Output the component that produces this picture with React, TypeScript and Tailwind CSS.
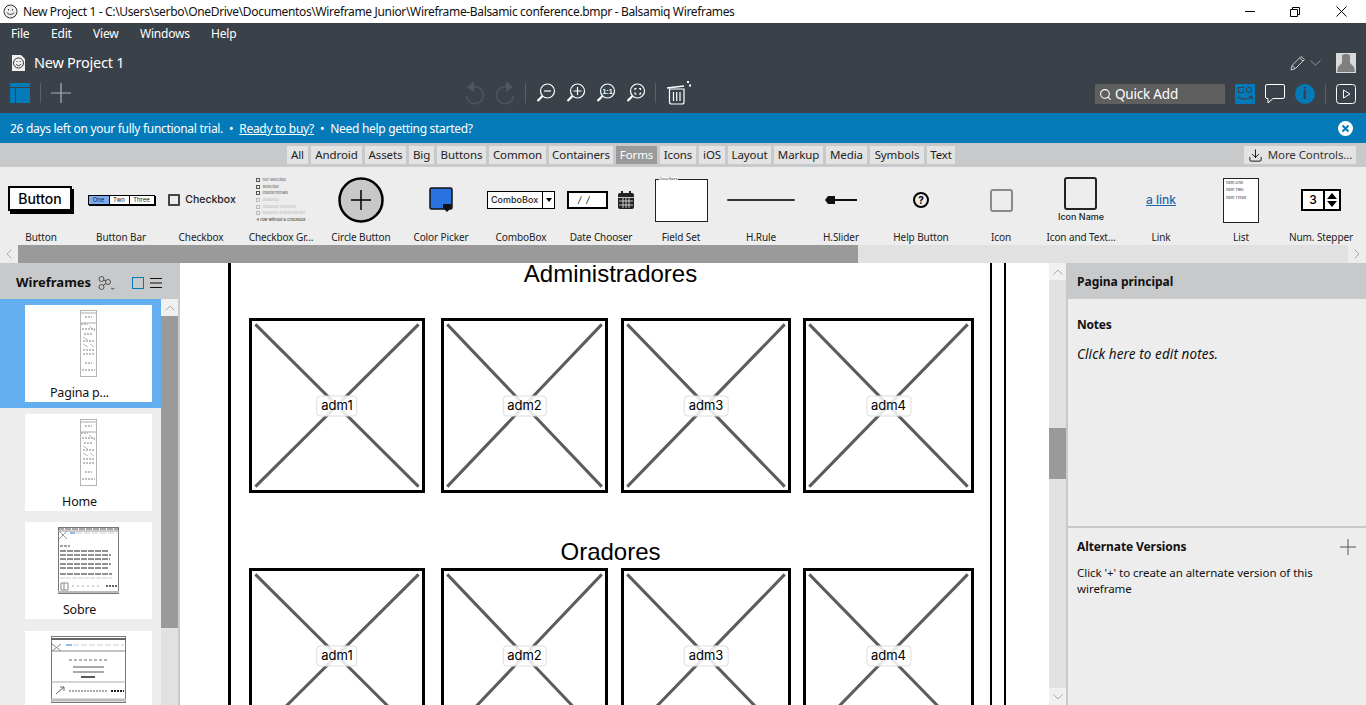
import { Download, Search } from 'lucide-react';

const tabs = [
  { label: 'All', w: 'w-[21px]' },
  { label: 'Android', w: 'w-[51px]' },
  { label: 'Assets', w: 'w-[41px]' },
  { label: 'Big', w: 'w-[25px]' },
  { label: 'Buttons', w: 'w-[49px]' },
  { label: 'Common', w: 'w-[57px]' },
  { label: 'Containers', w: 'w-[64px]' },
  { label: 'Forms', w: 'w-[41px]', active: true },
  { label: 'Icons', w: 'w-[36px]' },
  { label: 'iOS', w: 'w-[26px]' },
  { label: 'Layout', w: 'w-[43px]' },
  { label: 'Markup', w: 'w-[49px]' },
  { label: 'Media', w: 'w-[41px]' },
  { label: 'Symbols', w: 'w-[54px]' },
  { label: 'Text', w: 'w-[28px]' },
];

function ZoomIcon({ kind }: { kind: 'out' | 'in' | 'one' | 'fit' }) {
  return (
    <svg width="20" height="20" viewBox="0 0 20 20" fill="none" stroke="#fff" strokeWidth="1.2">
      <circle cx="11.5" cy="8" r="7" />
      <path d="M6.5 13 L1.5 18" strokeWidth="2.2" />
      {kind === 'out' && <path d="M8 8 H15" />}
      {kind === 'in' && <path d="M7.5 8 H15.5 M11.5 4 V12" />}
      {kind === 'one' && (
        <text x="11.5" y="10.5" fontSize="7" fontWeight="700" fill="#fff" stroke="none" textAnchor="middle" fontFamily="Liberation Sans">
          1:1
        </text>
      )}
      {kind === 'fit' && <path d="M9 7 V5.5 H10.5 M13 5.5 H14.5 V7 M14.5 9.5 V11 H13 M10.5 11 H9 V9.5" />}
    </svg>
  );
}

function Thumb({ kind }: { kind: number }) {
  if (kind < 2) {
    return (
      <svg width="17" height="67" viewBox="0 0 17 67" className="shrink-0">
        <rect x="0.5" y="0.5" width="16" height="66" fill="#fff" stroke="#b5b5b5" />
        <path d="M1 3 H16 M1 13 H16" stroke="#aaa" />
        <path d="M5 7 H12 M1 14 H8 M2 19 H15 M4 24 H13 M3 31 H14 M3 40 H14 M3 44 H14 M5 53 H12 M2 60 H15" stroke="#aaa" strokeDasharray="2 1" strokeWidth="1.5" />
        <path d="M9 16 L15 21 M3 27 L8 30 M3 34 L8 37 M10 34 L14 37" stroke="#bbb" />
      </svg>
    );
  }
  if (kind === 2) {
    return (
      <svg width="61" height="67" viewBox="0 0 61 67" className="shrink-0">
        <rect x="0.5" y="0.5" width="60" height="66" fill="#fff" stroke="#777" />
        <path d="M0 2 H61" stroke="#555" strokeDasharray="6 1" />
        <path d="M1 4 L9 12 M9 4 L1 12 M0 4 H61" stroke="#999" />
        <path d="M12 6 H17" stroke="#6aa4e0" strokeWidth="1.5" />
        <path d="M18 6 H59" stroke="#ccc" strokeDasharray="6 2" />
        <path d="M2 19 H12" stroke="#444" strokeDasharray="3 1" />
        <path d="M2 24 H50 M2 28 H53 M2 32 H52 M2 37 H53 M2 41 H50 M2 47 H54" stroke="#222" strokeDasharray="6 1" />
        <path d="M2 51 H54" stroke="#ccc" strokeDasharray="5 1" />
        <path d="M3 56 H10 V63 H3 Z M6 56 V63" fill="none" stroke="#888" />
        <path d="M14 59 H44" stroke="#aaa" strokeDasharray="2 3" />
        <path d="M48 59 H59" stroke="#333" strokeWidth="1.5" strokeDasharray="2 1" />
        <path d="M0 65 H61" stroke="#bbb" strokeWidth="2" />
      </svg>
    );
  }
  return (
    <svg width="75" height="67" viewBox="0 0 75 67" className="shrink-0">
      <rect x="0.5" y="0.5" width="74" height="66" fill="#fff" stroke="#777" />
      <path d="M0 3 H75" stroke="#666" strokeWidth="2" />
      <path d="M1 8 L10 15 M10 8 L1 15 M0 15 H75" stroke="#888" />
      <path d="M15 9 H21" stroke="#6aa4e0" strokeWidth="1.5" />
      <path d="M22 9 H73" stroke="#ccc" strokeDasharray="6 2" />
      <path d="M18 24 H57" stroke="#666" strokeDasharray="3 2" />
      <path d="M22 31 H53 M22 36 H53" stroke="#555" />
      <path d="M30 41 H44" stroke="#222" strokeWidth="1.5" />
      <path d="M0 46 H75" stroke="#aaa" />
      <path d="M5 58 L13 51 M9 51 H13 V55" stroke="#666" fill="none" />
      <path d="M18 55 H57" stroke="#555" strokeDasharray="2 1" />
      <path d="M60 55 H73" stroke="#222" strokeWidth="2" strokeDasharray="2 1" />
      <path d="M0 64 H75" stroke="#bbb" strokeWidth="3" />
    </svg>
  );
}

function WireImage({ label, w }: { label: string; w: string }) {
  return (
    <div className={`relative h-[175px] shrink-0 border-[3px] border-black ${w}`}>
      <svg className="h-full w-full" viewBox="0 0 100 100" preserveAspectRatio="none">
        <path d="M2 2 L98 98 M98 2 L2 98" stroke="#5c5c5c" strokeWidth="3" vectorEffect="non-scaling-stroke" />
      </svg>
      <div className="absolute left-1/2 top-1/2 flex h-[21px] -translate-x-1/2 -translate-y-1/2 items-center rounded-[4px] border border-[#dddddd] bg-white/85 px-[4px] font-['Inter',sans-serif] text-[13px] text-black">
        {label}
      </div>
    </div>
  );
}

function ImageRow({ names }: { names: string[] }) {
  return (
    <div className="flex pl-[18px]">
      <WireImage label={names[0]} w="w-[176px]" />
      <div className="ml-[16px]"><WireImage label={names[1]} w="w-[167px]" /></div>
      <div className="ml-[13px]"><WireImage label={names[2]} w="w-[170px]" /></div>
      <div className="ml-[12px]"><WireImage label={names[3]} w="w-[171px]" /></div>
    </div>
  );
}

function LibraryPreview({ name }: { name: string }) {
  switch (name) {
    case 'Button':
      return (
        <div className="-ml-[2px] -mt-[3px] flex h-[25px] w-[64px] items-center justify-center border-2 border-black bg-white font-['Inter',sans-serif] text-[14px] font-medium text-black shadow-[2px_3px_0_#000]">
          Button
        </div>
      );
    case 'Button Bar':
      return (
        <div className="flex h-[10px] w-[67px] border border-black text-center font-['Inter',sans-serif] text-[6px] leading-[8px] text-[#222] shadow-[1px_1px_0_#000]">
          <div className="w-[21px] border-r border-black bg-[#7cacef]">One</div>
          <div className="w-[20px] border-r border-black bg-white">Two</div>
          <div className="flex-1 bg-white">Three</div>
        </div>
      );
    case 'Checkbox':
      return (
        <div className="ml-[2px] flex items-center gap-[5px] font-['Inter',sans-serif] text-[10.5px] font-medium text-[#222]">
          <div className="size-[12px] rounded-[1px] border-2 border-[#444]" />
          Checkbox
        </div>
      );
    case 'Checkbox Gr...':
      return (
        <div className="flex flex-col gap-[2.7px] font-['Inter',sans-serif] text-[4px] leading-[4px] text-[#555]">
          {['not selected', 'selected', 'indeterminate'].map((t) => (
            <div key={t} className="flex items-center gap-[2px]"><div className="size-[4px] border border-[#555]" />{t}</div>
          ))}
          {['disabled', 'disabled selected', 'disabled indeterminate'].map((t) => (
            <div key={t} className="flex items-center gap-[2px] text-[#bbb]"><div className="size-[4px] border border-[#bbb]" />{t}</div>
          ))}
          <div className="text-[#222]">A row without a checkbox</div>
        </div>
      );
    case 'Circle Button':
      return (
        <svg width="46" height="46" viewBox="0 0 46 46" fill="none">
          <circle cx="23" cy="23" r="21.5" fill="#c8c8c8" stroke="#000" strokeWidth="2.5" />
          <path d="M13 23 H33 M23 13 V33" stroke="#000" strokeWidth="1.5" />
        </svg>
      );
    case 'Color Picker':
      return (
        <svg width="24" height="26" viewBox="0 0 24 26">
          <rect x="1" y="1" width="22" height="21" rx="1.5" fill="#2a72e0" stroke="#111" strokeWidth="1.5" />
          <path d="M14 17 H22 V21 L18 25 L14 21 Z" fill="#111" />
        </svg>
      );
    case 'ComboBox':
      return (
        <div className="flex h-[18px] w-[68px] border border-black bg-white font-['Inter',sans-serif] text-[9px] font-medium leading-[15px] text-[#222]">
          <div className="flex-1 pl-[3px]">ComboBox</div>
          <div className="flex w-[12px] items-center justify-center border-l border-black">
            <div className="size-0 border-x-[3px] border-t-[4px] border-x-transparent border-t-black" />
          </div>
        </div>
      );
    case 'Date Chooser':
      return (
        <div className="-ml-[1px] flex items-center gap-[10px]">
          <div className="h-[18px] w-[41px] border-2 border-black bg-white pl-[9px] font-['Inter',sans-serif] text-[9px] italic leading-[14px] text-black">/&nbsp;&nbsp;/</div>
          <svg width="16" height="18" viewBox="0 0 16 18">
            <rect x="0" y="2" width="16" height="16" rx="2" fill="#222" />
            <path d="M4 0 V4 M12 0 V4" stroke="#222" strokeWidth="2" />
            <path d="M0 6.5 H16 M1 10 H15 M1 14 H15 M5 7 V17 M8 7 V17 M11 7 V17" stroke="#ededed" strokeWidth="0.8" />
          </svg>
        </div>
      );
    case 'Field Set':
      return (
        <div className="relative h-[43px] w-[53px] border border-[#222] bg-white">
          <div className="absolute left-[3px] top-[-3px] bg-white px-px font-['Inter',sans-serif] text-[3px] leading-[4px] text-[#333]">Group Name</div>
        </div>
      );
    case 'H.Rule':
      return <div className="h-[2px] w-[68px] rounded-full bg-[#333]" />;
    case 'H.Slider':
      return (
        <svg width="34" height="12" viewBox="0 0 34 12">
          <path d="M8 6 H33" stroke="#111" strokeWidth="2" />
          <path d="M1 6 L4 2 H11 V10 H4 Z" fill="#111" />
        </svg>
      );
    case 'Help Button':
      return (
        <div className="flex size-[16px] items-center justify-center rounded-full border-2 border-black font-['Inter',sans-serif] text-[10px] font-bold leading-none text-black">?</div>
      );
    case 'Icon':
      return <div className="size-[23px] rounded-[3px] border-2 border-[#8a8a8a]" />;
    case 'Icon and Text...':
      return (
        <div className="flex flex-col items-center">
          <div className="size-[33px] rounded-[3px] border-2 border-[#222]" />
          <div className="mt-[1px] font-['Inter',sans-serif] text-[9px] font-medium leading-[12px] text-[#222]">Icon Name</div>
        </div>
      );
    case 'Link':
      return <div className="font-['Inter',sans-serif] text-[12px] font-medium text-[#1f69a8] underline">a link</div>;
    case 'List':
      return (
        <div className="flex h-[45px] w-[36px] flex-col gap-[3.5px] border border-[#222] bg-white pl-[2px] pt-[2px] font-['Inter',sans-serif] text-[4px] leading-[4px] text-[#333]">
          <div>Item One</div>
          <div>Item Two</div>
          <div>Item Three</div>
        </div>
      );
    case 'Num. Stepper':
      return (
        <div className="flex h-[22px] w-[40px] border-2 border-black bg-white font-['Inter',sans-serif] text-[12px] font-medium leading-[18px] text-black">
          <div className="w-[22px] border-r-2 border-black text-center">3</div>
          <div className="flex flex-1 flex-col items-center justify-center gap-[2px]">
            <div className="size-0 border-x-[5px] border-b-[6px] border-x-transparent border-b-black" />
            <div className="size-0 border-x-[5px] border-t-[6px] border-x-transparent border-t-black" />
          </div>
        </div>
      );
    default:
      return null;
  }
}

const libraryItems = [
  'Button', 'Button Bar', 'Checkbox', 'Checkbox Gr...', 'Circle Button', 'Color Picker', 'ComboBox', 'Date Chooser', 'Field Set',
  'H.Rule', 'H.Slider', 'Help Button', 'Icon', 'Icon and Text...', 'Link', 'List', 'Num. Stepper',
];

const thumbs = [
  { label: 'Pagina p...', h: 'h-[109px]', selected: true },
  { label: 'Home', h: 'h-[108px]' },
  { label: 'Sobre', h: 'h-[109px]' },
  { label: '', h: 'h-[109px]' },
];

export default function App() {
  return (
    <div className="flex h-[705px] w-[1366px] flex-col overflow-hidden bg-white font-['Noto_Sans',sans-serif] text-[12px] text-black">
      {/* Title bar */}
      <div className="flex h-[23px] shrink-0 items-center bg-white pl-[3px]">
        <svg width="15" height="15" viewBox="0 0 15 15" fill="none" stroke="#333" strokeWidth="1">
          <circle cx="7.5" cy="7.5" r="6.5" fill="#eee" />
          <path d="M4 8.5 C5 11 10 11 11 8.5" />
          <path d="M5.5 5 V6.5 M9.5 5 V6.5" />
        </svg>
        <span className="ml-[5px] tracking-[-0.34px] text-[#111]">
          New Project 1 - C:\Users\serbo\OneDrive\Documentos\Wireframe Junior\Wireframe-Balsamic conference.bmpr - Balsamiq Wireframes
        </span>
        <div className="ml-auto flex items-center">
          <div className="mr-[35px] h-px w-[10px] bg-black" />
          <svg className="mr-[36px]" width="10" height="10" viewBox="0 0 10 10" fill="none" stroke="#000">
            <path d="M0.5 2.5 H7.5 V9.5 H0.5 Z M2.5 2.5 V0.5 H9.5 V7.5 H7.5" />
          </svg>
          <svg className="mr-[19px]" width="11" height="11" viewBox="0 0 11 11" stroke="#000">
            <path d="M0.5 0.5 L10.5 10.5 M10.5 0.5 L0.5 10.5" />
          </svg>
        </div>
      </div>

      {/* Dark header */}
      <div className="flex h-[90px] shrink-0 flex-col bg-[#3a4149] text-white">
        <div className="flex h-[20px] items-center pl-[11px] pt-[1px] tracking-[-0.2px]">
          <span className="w-[40px]">File</span>
          <span className="w-[42px]">Edit</span>
          <span className="w-[47px]">View</span>
          <span className="w-[71px]">Windows</span>
          <span>Help</span>
        </div>
        <div className="flex h-[40px] items-center pl-[11px] pr-[10px]">
          <svg width="14" height="16" viewBox="0 0 14 16">
            <path d="M1 0 H10 L14 4 V16 H1 Z" fill="#f0f0f0" />
            <circle cx="7.5" cy="8" r="5" fill="none" stroke="#333" />
            <path d="M5 9 C6 11 9 11 10 9 M6 6 V7 M9 6 V7" stroke="#333" fill="none" />
          </svg>
          <span className="ml-[9px] text-[14.5px] tracking-[-0.25px]">New Project 1</span>
          <div className="ml-auto flex items-center">
            <svg width="16" height="16" viewBox="0 0 16 16" fill="none" stroke="#c8cbce" strokeWidth="1">
              <path d="M1 15 L2 10.5 L11 1.5 L14.5 4.5 L5.5 13.5 Z M2 10.5 L5.5 13.5 M9.5 3 L13 6" />
            </svg>
            <svg className="ml-[4px]" width="11" height="6" viewBox="0 0 11 6" fill="none" stroke="#8d9298">
              <path d="M0.5 0.5 L5.5 5 L10.5 0.5" />
            </svg>
            <div className="ml-[15px] size-[20px] bg-[#d9d9d9]">
              <svg width="20" height="20" viewBox="0 0 20 20">
                <path d="M6 2 Q10 0 14 2 V10 L18 14 L19 19 H1 L2 14 L6 10 Z" fill="#7f7f7f" />
              </svg>
            </div>
          </div>
        </div>
        <div className="flex h-[20px] items-center pl-[10px] pr-[10px]">
          <svg width="20" height="20" viewBox="0 0 20 20">
            <rect width="20" height="20" fill="#057ab9" />
            <path d="M0 4.5 H20 M5.5 4.5 V20" stroke="#3a4149" />
          </svg>
          <div className="ml-[10px] h-[20px] w-px bg-[#5a6067]" />
          <svg className="ml-[10px]" width="20" height="20" viewBox="0 0 20 20" stroke="#aeb2b6" strokeWidth="1.2">
            <path d="M0 10 H20 M10 0 V20" />
          </svg>
          <svg className="ml-[394px]" width="20" height="24" viewBox="0 0 20 24" fill="none" stroke="#4f565d" strokeWidth="1.5">
            <path d="M8 6 A8.5 8.5 0 1 1 1.5 15" />
            <path d="M9 0 L2 6 L9 11 Z" fill="#4f565d" stroke="none" />
          </svg>
          <svg className="ml-[10px]" width="20" height="24" viewBox="0 0 20 24" fill="none" stroke="#4f565d" strokeWidth="1.5">
            <path d="M12 6 A8.5 8.5 0 1 0 18.5 15" />
            <path d="M11 0 L18 6 L11 11 Z" fill="#4f565d" stroke="none" />
          </svg>
          <div className="ml-[10px] h-[20px] w-px bg-[#5a6067]" />
          <div className="ml-[10px]"><ZoomIcon kind="out" /></div>
          <div className="ml-[10px]"><ZoomIcon kind="in" /></div>
          <div className="ml-[10px]"><ZoomIcon kind="one" /></div>
          <div className="ml-[10px]"><ZoomIcon kind="fit" /></div>
          <div className="ml-[9px] h-[20px] w-px bg-[#5a6067]" />
          <svg className="-mt-[3px] ml-[10px]" width="26" height="26" viewBox="0 0 26 26" fill="none" stroke="#fff" strokeWidth="1.2">
            <path d="M1 9 L18 7" strokeWidth="1.6" />
            <path d="M3.5 10 H18 V23 Q18 25 16 25 H5.5 Q3.5 25 3.5 23 Z" />
            <path d="M7.5 13 V22 M10.7 13 V22 M14 13 V22" />
            <path d="M21 3 H23 M23 6.5 H25" strokeWidth="2" />
          </svg>
          <div className="ml-auto mt-[2px] flex items-center">
            <div className="flex h-[20px] w-[130px] items-center bg-[#5f5f5f] pl-[4px] text-[13.5px] tracking-[-0.2px]">
              <Search size={13} strokeWidth={2} />
              <span className="ml-[3px]">Quick Add</span>
            </div>
            <svg className="ml-[10px]" width="20" height="20" viewBox="0 0 20 20" fill="none" stroke="#3a4149">
              <rect width="20" height="20" fill="#057ab9" stroke="none" />
              <rect x="3.5" y="3.5" width="5" height="5" />
              <circle cx="14" cy="6" r="2.7" />
              <path d="M3 13 Q9 17 16 13.5 M14 12.5 H17 V15.5" strokeWidth="1.3" />
            </svg>
            <svg className="ml-[10px]" width="20" height="20" viewBox="0 0 20 20" fill="none" stroke="#fff">
              <path d="M2 0.5 H18 Q19.5 0.5 19.5 2 V13 Q19.5 14.5 18 14.5 H8 L3 19 V14.5 H2 Q0.5 14.5 0.5 13 V2 Q0.5 0.5 2 0.5 Z" />
            </svg>
            <div className="ml-[10px] flex size-[20px] items-center justify-center rounded-full bg-[#057ab9] font-['Liberation_Sans',sans-serif] text-[16px] font-bold text-[#3a4149]">i</div>
            <div className="ml-[10px] h-[20px] w-px bg-[#5a6067]" />
            <svg className="ml-[10px]" width="20" height="20" viewBox="0 0 20 20" fill="none" stroke="#fff">
              <rect x="0.5" y="0.5" width="19" height="19" rx="3" />
              <path d="M7.5 6 L14 10 L7.5 14 Z" />
            </svg>
          </div>
        </div>
      </div>

      {/* Trial banner */}
      <div className="flex h-[30px] shrink-0 items-center bg-[#057ab9] pl-[10px] pr-[13px] pt-[1px] text-white tracking-[-0.3px]">
        <span>26 days left on your fully functional trial.</span>
        <span className="mx-[6px]">•</span>
        <span className="underline">Ready to buy?</span>
        <span className="mx-[6px]">•</span>
        <span>Need help getting started?</span>
        <svg className="ml-auto" width="15" height="15" viewBox="0 0 15 15">
          <circle cx="7.5" cy="7.5" r="7.5" fill="#fff" />
          <path d="M4.5 4.5 L10.5 10.5 M10.5 4.5 L4.5 10.5" stroke="#057ab9" strokeWidth="2" />
        </svg>
      </div>

      {/* Library tabs */}
      <div className="flex h-[24px] shrink-0 bg-[#c8c9cb] pl-[287px] pr-[10px] pt-[3px] text-[11.5px] tracking-[-0.1px]">
        <div className="flex h-[18px] gap-[3px]">
          {tabs.map((t) => (
            <div
              key={t.label}
              className={`flex items-center justify-center ${t.w} ${t.active ? 'bg-[#9a9a9a] text-white' : 'bg-[#e3e3e3] text-[#222]'}`}
            >
              {t.label}
            </div>
          ))}
        </div>
        <div className="ml-auto flex h-[18px] w-[112px] items-center justify-center gap-[5px] bg-[#e3e3e3] text-[#333]">
          <Download size={15} strokeWidth={1.4} className="text-black" />
          More Controls...
        </div>
      </div>

      {/* Library */}
      <div className="flex h-[78px] shrink-0 bg-[#ededed] pl-px pt-[3px]">
        {libraryItems.map((name) => (
          <div key={name} className="flex w-[80px] shrink-0 flex-col items-center">
            <div className="flex h-[60px] items-center justify-center">
              <LibraryPreview name={name} />
            </div>
            <div className="flex h-[14px] items-center whitespace-nowrap text-[10px] tracking-[-0.1px] text-[#222]">{name}</div>
          </div>
        ))}
      </div>
      <div className="flex h-[18px] shrink-0 bg-[#e1e1e1]">
        <div className="flex w-[18px] items-center justify-center bg-[#ededed]">
          <svg width="6" height="10" viewBox="0 0 6 10" fill="none" stroke="#aaa"><path d="M5.5 0.5 L1 5 L5.5 9.5" /></svg>
        </div>
        <div className="w-[840px] bg-[#9a9a9a]" />
        <div className="ml-auto flex w-[18px] items-center justify-center bg-[#ededed]">
          <svg width="6" height="10" viewBox="0 0 6 10" fill="none" stroke="#aaa"><path d="M0.5 0.5 L5 5 L0.5 9.5" /></svg>
        </div>
      </div>

      {/* Main */}
      <div className="flex min-h-0 flex-1">
        {/* Wireframes list */}
        <div className="flex w-[180px] shrink-0 flex-col border-r-2 border-[#c8c9cb] bg-[#ededed]">
          <div className="flex h-[36px] shrink-0 items-center bg-[#c8c9cb] pl-[16px] pt-[3px]">
            <span className="text-[13px] font-bold text-[#111]">Wireframes</span>
            <svg className="ml-[7px]" width="17" height="14" viewBox="0 0 17 14" fill="none" stroke="#444" strokeWidth="0.9">
              <circle cx="3.5" cy="3" r="2.5" /><circle cx="10" cy="6" r="2.5" /><circle cx="3.5" cy="11" r="2.5" />
              <path d="M5.5 4 L8 5 M5 9.5 L8 7.5 M13 12 L15 13 L16.5 12" />
            </svg>
            <div className="ml-[17px] size-[12px] border-[1.5px] border-[#057ab9]" />
            <svg className="ml-[6px]" width="12" height="12" viewBox="0 0 12 12" stroke="#111">
              <path d="M0 1.5 H12 M0 6 H12 M0 10.5 H12" />
            </svg>
          </div>
          <div className="flex min-h-0 flex-1">
            <div className="w-[161px] shrink-0 overflow-hidden">
              {thumbs.map((t, i) => (
                <div key={i} className={`${t.h} px-[25px] pr-[9px] pt-[6px] ${t.selected ? 'bg-[#62aeef]' : ''}`}>
                  <div className="flex h-[97px] w-[127px] flex-col items-center bg-white pt-[5px]">
                    <Thumb kind={i} />
                    {t.label && <div className="mt-[7px] pr-[18px] text-[12.5px] leading-[18px] tracking-[-0.2px] text-[#111]">{t.label}</div>}
                  </div>
                </div>
              ))}
            </div>
            <div className="flex w-[17px] shrink-0 flex-col bg-[#e1e1e1]">
              <div className="flex h-[17px] items-center justify-center bg-[#f0f0f0]">
                <svg width="10" height="6" viewBox="0 0 10 6" fill="none" stroke="#aaa"><path d="M0.5 5.5 L5 1 L9.5 5.5" /></svg>
              </div>
              <div className="h-[312px] bg-[#9a9a9a]" />
            </div>
          </div>
        </div>

        {/* Canvas */}
        <div className="min-w-0 flex-1 overflow-hidden bg-white pl-[48px]">
          <div className="h-full w-[778px] border-r-2 border-black">
            <div className="h-full w-[764px] border-x-[3px] border-r-2 border-black">
              <div className="flex h-[22px] items-center justify-center font-['Liberation_Sans',sans-serif] text-[24px] leading-[22px]">Administradores</div>
              <div className="h-[33px]" />
              <ImageRow names={['adm1', 'adm2', 'adm3', 'adm4']} />
              <div className="mt-[48px] flex h-[22px] items-center justify-center font-['Liberation_Sans',sans-serif] text-[24px] leading-[22px]">Oradores</div>
              <div className="h-[5px]" />
              <ImageRow names={['adm1', 'adm2', 'adm3', 'adm4']} />
            </div>
          </div>
        </div>

        {/* Canvas scrollbar */}
        <div className="flex w-[17px] shrink-0 flex-col bg-[#e1e1e1]">
          <div className="flex h-[17px] items-center justify-center bg-[#f0f0f0]">
            <svg width="10" height="6" viewBox="0 0 10 6" fill="none" stroke="#aaa"><path d="M0.5 5.5 L5 1 L9.5 5.5" /></svg>
          </div>
          <div className="mt-[148px] h-[51px] shrink-0 bg-[#9a9a9a]" />
          <div className="mt-auto flex h-[17px] items-center justify-center bg-[#f0f0f0]">
            <svg width="10" height="6" viewBox="0 0 10 6" fill="none" stroke="#aaa"><path d="M0.5 0.5 L5 5 L9.5 0.5" /></svg>
          </div>
        </div>

        {/* Right panel */}
        <div className="flex w-[300px] shrink-0 flex-col border-l-2 border-[#c8c9cb] bg-[#ededed] text-[#111]">
          <div className="flex h-[36px] shrink-0 items-center bg-[#c8c9cb] pl-[9px] pt-[1px] text-[12px] font-bold">Pagina principal</div>
          <div className="h-[229px] shrink-0 border-b-2 border-[#c8c9cb] pl-[9px] pt-[16px]">
            <div className="text-[12px] font-bold leading-[20px] tracking-[-0.2px]">Notes</div>
            <div className="mt-[9px] text-[13.5px] italic leading-[20px] tracking-[0.1px]">Click here to edit notes.</div>
          </div>
          <div className="pl-[9px] pr-[10px] pt-[9px]">
            <div className="flex h-[20px] items-center justify-between">
              <span className="text-[12px] font-bold tracking-[-0.1px]">Alternate Versions</span>
              <svg width="16" height="16" viewBox="0 0 16 16" stroke="#555"><path d="M0 8 H16 M8 0 V16" /></svg>
            </div>
            <div className="mt-[8px] w-[260px] text-[11.5px] leading-[16px] tracking-[-0.05px]">
              Click '+' to create an alternate version of this wireframe
            </div>
          </div>
        </div>
      </div>
    </div>
  );
}
